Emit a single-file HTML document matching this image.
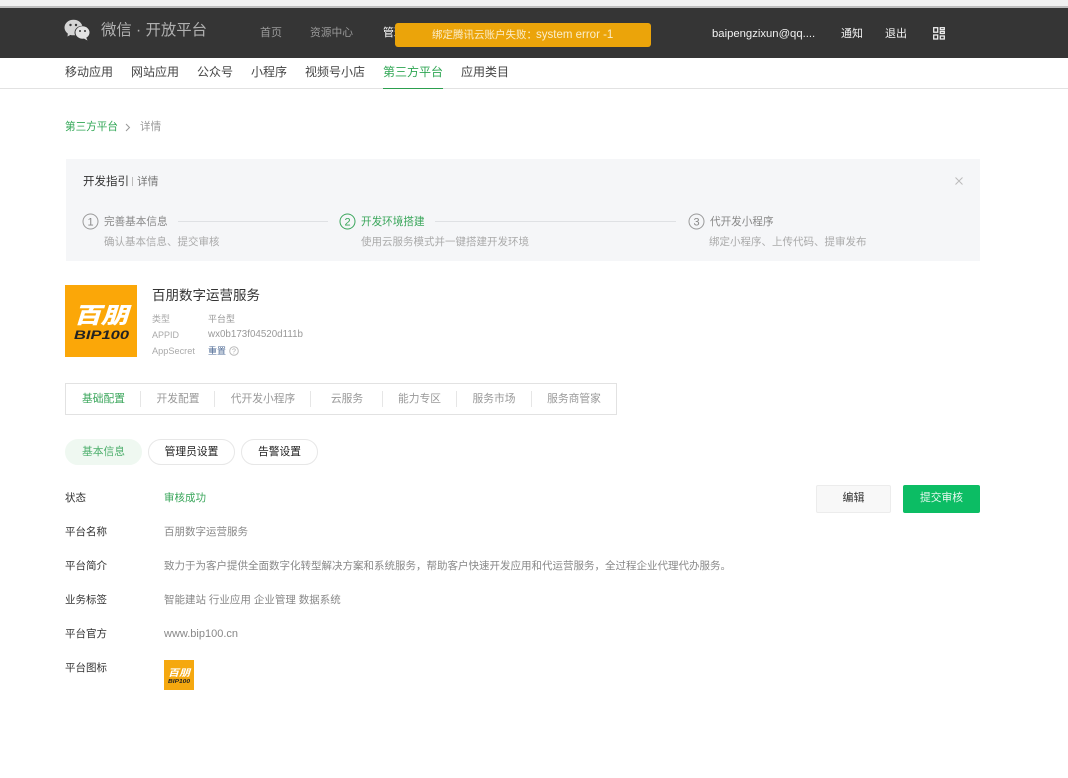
<!DOCTYPE html>
<html lang="zh"><head><meta charset="utf-8"><title>微信开放平台</title>
<style>
html,body{margin:0;padding:0;background:#fff}
body{width:1068px;height:778px;position:relative;overflow:hidden;font-family:"Liberation Sans","Noto Sans CJK SC",sans-serif;font-size:12px;color:#353535}
.a{position:absolute;white-space:nowrap;line-height:16px}
.b{position:absolute;box-sizing:border-box}
.sub{font-size:12px;color:#444;top:64px}
.lab{left:65px;font-size:10.5px;color:#333}
.val{left:164px;font-size:10.5px;color:#888}
.tab{font-size:10.75px;color:#999;top:391px;text-align:center}
.sep{position:absolute;top:391px;width:1px;height:16px;background:#e6e6e6}
.pill{position:absolute;top:439px;height:26px;border-radius:13px;box-sizing:border-box;text-align:center;line-height:25px;font-size:10.75px;border:1px solid #e7e7e7;color:#222}
</style></head><body>
<div class="b" style="left:0;top:0;width:1068px;height:6px;background:#f0f0f0"></div>
<div class="b" style="left:0;top:6px;width:1068px;height:2px;background:#bdbdbd"></div>
<div class="b" style="left:0;top:8px;width:1068px;height:50px;background:#353535"></div>

<svg class="b" style="left:64px;top:19px" width="28" height="23" viewBox="0 0 28 23">
<ellipse cx="9.5" cy="8.5" rx="9" ry="7.8" fill="#d4d4d4"/><path d="M4 13l-.5 4.5 4.5-2.500z" fill="#d4d4d4"/>
<ellipse cx="18.5" cy="13.5" rx="8" ry="6.8" fill="#353535"/>
<ellipse cx="18.5" cy="13.5" rx="7" ry="6.2" fill="#e2e2e2"/><path d="M22 18l1.500 3.500-4.500-2.500z" fill="#e2e2e2"/>
<circle cx="6.5" cy="6" r="1.2" fill="#353535"/><circle cx="12" cy="6" r="1.2" fill="#353535"/>
<circle cx="16" cy="12" r="1" fill="#353535"/><circle cx="21" cy="12" r="1" fill="#353535"/>
</svg>
<div class="a" style="left:101px;top:21px;font-size:15.4px;line-height:20px;color:#b0b0b0">微信 · 开放平台</div>
<div class="a" style="left:260px;top:25px;font-size:11px;color:#9a9a9a">首页</div>
<div class="a" style="left:310px;top:25px;font-size:10.75px;color:#9a9a9a">资源中心</div>
<div class="a" style="left:383px;top:25px;font-size:11px;color:#fff">管理中心</div>
<div class="b" style="left:395px;top:23px;width:256px;height:24px;background:#eba40a;border-radius:3px"></div>
<div class="a" style="left:432px;top:27px;font-size:10.5px;color:#fbeecb">绑定腾讯云账户失败：<span style="font-size:11.5px;margin-left:-1px">system error -1</span></div>
<div class="a" style="left:712px;top:26px;font-size:11.3px;color:#f2f2f2">baipengzixun@qq....</div>
<div class="a" style="left:841px;top:26px;font-size:11px;color:#f2f2f2">通知</div>
<div class="a" style="left:885px;top:26px;font-size:11px;color:#f2f2f2">退出</div>
<svg class="b" style="left:933px;top:27px" width="12" height="13" viewBox="0 0 12 13" fill="none" stroke="#eee" stroke-width="1.3">
<rect x=".7" y=".7" width="4" height="4.5"/><rect x="7.3" y=".7" width="4" height="2"/><rect x="7.3" y="4.5" width="4" height="2"/><rect x=".7" y="8" width="4" height="4"/><rect x="7.3" y="9" width="4" height="3"/></svg>

<div class="a sub" style="left:65px">移动应用</div>
<div class="a sub" style="left:131px">网站应用</div>
<div class="a sub" style="left:197px">公众号</div>
<div class="a sub" style="left:251px">小程序</div>
<div class="a sub" style="left:305px">视频号小店</div>
<div class="a sub" style="left:383px;color:#2ea653">第三方平台</div>
<div class="a sub" style="left:461px">应用类目</div>
<div class="b" style="left:0;top:88px;width:1068px;height:1px;background:#e2e2e2"></div>
<div class="b" style="left:383px;top:88px;width:60px;height:1px;background:#2c9f4e"></div>

<div class="a" style="left:65px;top:119px;font-size:10.6px;color:#2ea653">第三方平台</div>
<svg class="b" style="left:125px;top:123px" width="6" height="9" viewBox="0 0 6 9" fill="none" stroke="#999"><path d="M1 1l3.500 3.500L1 8"/></svg>
<div class="a" style="left:140px;top:119px;font-size:10.6px;color:#999">详情</div>

<div class="b" style="left:66px;top:159px;width:914px;height:102px;background:#f5f6f8"></div>
<div class="a" style="left:83px;top:174px;font-size:11.5px;color:#333">开发指引</div>
<div class="b" style="left:132px;top:177px;width:1px;height:9px;background:#bbb"></div>
<div class="a" style="left:137px;top:174px;font-size:10.75px;color:#777">详情</div>
<svg class="b" style="left:955px;top:177px" width="8" height="8" viewBox="0 0 8 8" stroke="#bbb"><path d="M.5.5l7 7M7.500.5l-7 7"/></svg>

<svg class="b" style="left:82px;top:213px" width="17" height="17"><circle cx="8.5" cy="8.5" r="7.5" fill="none" stroke="#999"/><text x="8.5" y="12.5" font-size="11" fill="#888" text-anchor="middle" font-family="Liberation Sans">1</text></svg>
<div class="a" style="left:104px;top:214px;font-size:10.6px;color:#888">完善基本信息</div>
<div class="a" style="left:104px;top:234px;font-size:10.5px;color:#aaa">确认基本信息、提交审核</div>
<div class="b" style="left:178px;top:221px;width:150px;height:1px;background:#dfe1e4"></div>
<svg class="b" style="left:339px;top:213px" width="17" height="17"><circle cx="8.5" cy="8.5" r="7.5" fill="none" stroke="#3aa65b"/><text x="8.5" y="12.5" font-size="11" fill="#3aa65b" text-anchor="middle" font-family="Liberation Sans">2</text></svg>
<div class="a" style="left:361px;top:214px;font-size:10.6px;color:#3aa65b">开发环境搭建</div>
<div class="a" style="left:361px;top:234px;font-size:10.5px;color:#aaa">使用云服务模式并一键搭建开发环境</div>
<div class="b" style="left:435px;top:221px;width:241px;height:1px;background:#dfe1e4"></div>
<svg class="b" style="left:688px;top:213px" width="17" height="17"><circle cx="8.5" cy="8.5" r="7.5" fill="none" stroke="#999"/><text x="8.5" y="12.5" font-size="11" fill="#888" text-anchor="middle" font-family="Liberation Sans">3</text></svg>
<div class="a" style="left:710px;top:214px;font-size:10.6px;color:#888">代开发小程序</div>
<div class="a" style="left:709px;top:234px;font-size:10.5px;color:#aaa">绑定小程序、上传代码、提审发布</div>

<svg class="b" style="left:65px;top:285px" width="72" height="72" viewBox="0 0 72 72">
<rect width="72" height="72" fill="#fba708"/>
<text x="9" y="38" font-size="22" font-weight="bold" font-style="italic" fill="#fff" stroke="#fff" stroke-width=".5" textLength="54" lengthAdjust="spacingAndGlyphs" font-family="Liberation Sans,Noto Sans CJK SC,sans-serif">百朋</text>
<text x="9" y="54" font-size="11.5" font-weight="bold" font-style="italic" fill="#222" textLength="55" lengthAdjust="spacingAndGlyphs" font-family="Liberation Sans,sans-serif">BIP100</text>
</svg>

<div class="a" style="left:152px;top:287px;font-size:13.5px;line-height:17px;color:#333">百朋数字运营服务</div>
<div class="a" style="left:152px;top:311px;font-size:9px;color:#aaa">类型</div>
<div class="a" style="left:208px;top:311px;font-size:9px;color:#999">平台型</div>
<div class="a" style="left:152px;top:327px;font-size:9px;color:#aaa">APPID</div>
<div class="a" style="left:208px;top:327px;font-size:9.8px;color:#999">wx0b173f04520d111b</div>
<div class="a" style="left:152px;top:343px;font-size:9.2px;color:#aaa">AppSecret</div>
<div class="a" style="left:208px;top:343px;font-size:9px;color:#4d6a94">重置</div>
<svg class="b" style="left:229px;top:346px" width="10" height="10"><circle cx="5" cy="5" r="4.3" fill="none" stroke="#bbb"/><text x="5" y="7.500" font-size="7" fill="#aaa" text-anchor="middle" font-family="Liberation Sans">?</text></svg>

<div class="b" style="left:65px;top:383px;width:552px;height:32px;border:1px solid #e2e2e2"></div>
<div class="a tab" style="left:66px;width:75px;color:#3aa65b">基础配置</div>
<div class="a tab" style="left:141px;width:74px">开发配置</div>
<div class="a tab" style="left:212px;width:102px">代开发小程序</div>
<div class="a tab" style="left:311px;width:72px">云服务</div>
<div class="a tab" style="left:383px;width:73px">能力专区</div>
<div class="a tab" style="left:457px;width:74px">服务市场</div>
<div class="a tab" style="left:532px;width:84px">服务商管家</div>
<div class="sep" style="left:140px"></div><div class="sep" style="left:214px"></div><div class="sep" style="left:310px"></div><div class="sep" style="left:382px"></div><div class="sep" style="left:456px"></div><div class="sep" style="left:531px"></div>

<div class="pill" style="left:65px;width:77px;background:#eff8f1;border-color:#eff8f1;color:#4cae6b">基本信息</div>
<div class="pill" style="left:148px;width:87px">管理员设置</div>
<div class="pill" style="left:241px;width:77px">告警设置</div>

<div class="a lab" style="top:490px">状态</div><div class="a val" style="top:490px;color:#3aa65b">审核成功</div>
<div class="a lab" style="top:524px">平台名称</div><div class="a val" style="top:524px">百朋数字运营服务</div>
<div class="a lab" style="top:558px">平台简介</div><div class="a val" style="top:558px">致力于为客户提供全面数字化转型解决方案和系统服务，帮助客户快速开发应用和代运营服务，全过程企业代理代办服务。</div>
<div class="a lab" style="top:592px">业务标签</div><div class="a val" style="top:592px">智能建站 行业应用 企业管理 数据系统</div>
<div class="a lab" style="top:626px">平台官方</div><div class="a val" style="top:626px;font-size:11px">www.bip100.cn</div>
<div class="a lab" style="top:660px">平台图标</div>
<svg class="b" style="left:164px;top:660px" width="30" height="30" viewBox="0 0 30 30">
<rect width="30" height="30" fill="#f5a80f"/>
<text x="4" y="16" font-size="9.5" font-weight="bold" font-style="italic" fill="#fff" textLength="22" lengthAdjust="spacingAndGlyphs" font-family="Liberation Sans,Noto Sans CJK SC,sans-serif">百朋</text>
<text x="4" y="23" font-size="5" font-weight="bold" font-style="italic" fill="#222" textLength="22" lengthAdjust="spacingAndGlyphs" font-family="Liberation Sans,sans-serif">BIP100</text>
</svg>

<div class="b" style="left:816px;top:485px;width:75px;height:28px;background:#f8f8f8;border:1px solid #ececec;border-radius:2px;text-align:center;line-height:24px;font-size:11px;color:#333">编辑</div>
<div class="b" style="left:903px;top:485px;width:77px;height:28px;background:#0cbd64;border-radius:2px;text-align:center;line-height:26px;font-size:10.75px;color:#e6f8ee">提交审核</div>
</body></html>
